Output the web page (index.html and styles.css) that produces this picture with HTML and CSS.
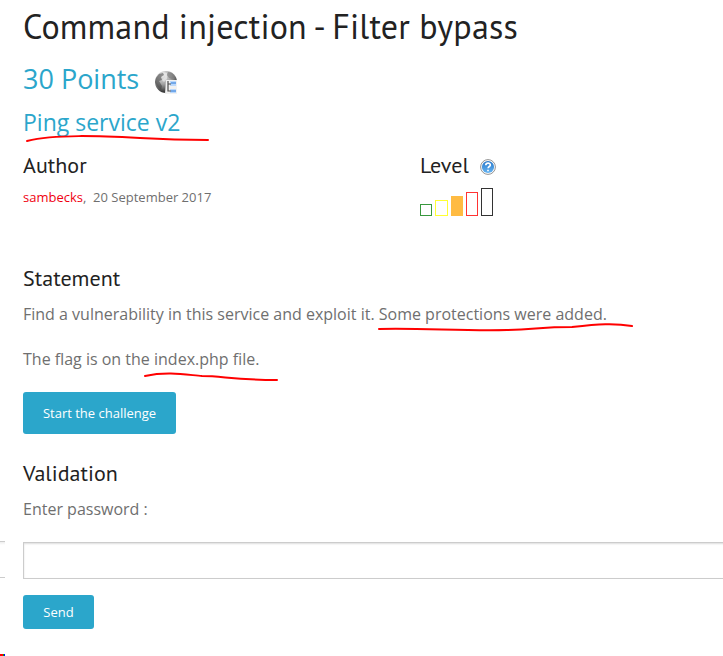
FILE: index.html
```html
<!DOCTYPE html>
<html lang="en">
<head>
<meta charset="utf-8">
<title>Command injection - Filter bypass</title>
<link rel="stylesheet" href="styles.css">
</head>
<body>
<main class="challenge">
  <h1 class="title"><span>Command injection - Filter bypass</span></h1>
  <h2 class="points"><span>30 Points</span>
    <svg class="globe" width="24" height="24" viewBox="0 0 24 24">
      <defs><radialGradient id="sphere" cx=".35" cy=".2" r=".8"><stop offset="0" stop-color="#eee"/><stop offset=".5" stop-color="#a2a2a2"/><stop offset="1" stop-color="#292929"/></radialGradient></defs>
      <circle cx="12" cy="12" r="11" fill="url(#sphere)"/>
      <path d="M2 8 5 4 9 3 10 5 7 7 8 10 5 11 8 16 7 20 3 16 1 12Z" fill="#444" opacity=".55"/>
      <path d="M14 2 18 3 21 7 18 9 15 8 13 5Z" fill="#777" opacity=".6"/>
      <path d="M9 2 13 3 13 9 10 12 8 10 11 7Z" fill="#eee" opacity=".6"/>
      <path d="M12 10h11v14H11z" fill="#f1f1f1"/>
      <path d="M16 11h6v5h-6zm0 8h6v4h-6z" fill="#bad8fb"/>
      <path d="M17 13h5m-5 8h5" stroke="#72a8ea" stroke-width="2"/>
      <path d="M14 11v10h3m-3-7h3" fill="none" stroke="#4b4b4b" stroke-width="1.2"/>
    </svg>
  </h2>
  <h3 class="subtitle"><span class="marked">Ping service v2
    <svg class="stroke stroke-name" width="186" height="10" viewBox="0 0 186 10"><path d="M2 6C30-1 75 1 115 3Q150 5 183 5"/></svg>
  </span></h3>
  <div class="info">
    <section>
      <h4 class="heading author"><span>Author</span></h4>
      <p class="meta"><a class="user">sambecks</a>,&nbsp; 20 September 2017</p>
    </section>
    <section>
      <h4 class="heading level"><span>Level</span>
        <svg class="help" width="16" height="16" viewBox="0 0 16 16">
          <defs><linearGradient id="blue" x2="0" y2="1"><stop stop-color="#2676c9"/><stop offset="1" stop-color="#67b5f2"/></linearGradient></defs>
          <circle cx="8" cy="8" r="7.4" fill="#fff" stroke="#929292"/><circle cx="8" cy="8" r="6.1" fill="url(#blue)"/>
          <path d="M5.8 6.2C5.8 3.4 10.4 3.6 10.3 6 10.2 7.6 8.2 7.5 8.1 9.3M8 10.7v1.6" fill="none" stroke="#fff" stroke-width="1.7"/>
        </svg>
      </h4>
      <div class="bars"><i class="bar b1"></i><i class="bar b2"></i><i class="bar b3"></i><i class="bar b4"></i><i class="bar b5"></i></div>
    </section>
  </div>
  <h4 class="heading statement"><span>Statement</span></h4>
  <p class="text first">Find a vulnerability in this service and exploit it. <span class="marked">Some protections were added.
    <svg class="stroke stroke-added" width="258" height="12" viewBox="0 0 258 12"><path d="M2 6C45 5 85 8 130 7C160 6 165 4 195 4C222 1 237 0 255 3"/></svg>
  </span></p>
  <p class="text">The flag is on the <span class="marked">index.php file.
    <svg class="stroke stroke-file" width="138" height="12" viewBox="0 0 138 12"><path d="M2 5C25 0 45 4 59 5C80 5 90 9 134 9"/></svg>
  </span></p>
  <button class="button start">Start the challenge</button>
  <h4 class="heading validation"><span>Validation</span></h4>
  <label class="text password" for="password">Enter password :</label>
  <div class="fields"><div class="neighbor"></div><input class="field" id="password" type="password"></div>
  <button class="button send">Send</button>
</main>
<div class="corner"></div>
</body>
</html>
```
FILE: styles.css
```css
* { box-sizing: border-box; }
body { margin: 0; width: 723px; height: 656px; overflow: hidden; position: relative; background: #fff; color: #6f6f6f; font: 16px/25px "Open Sans", sans-serif; }
h1, h2, h3, h4, p { margin: 0; font-weight: 400; }
.challenge { padding-left: 23px; height: 656px; display: flex; flex-direction: column; align-items: flex-start; }
.title { height: 54px; color: #222; font: 34px/52px "PT Sans", Lato, sans-serif; letter-spacing: .17px; white-space: nowrap; }
.points { display: flex; align-items: center; gap: 15px; height: 50px; color: #2ba6cb; font-size: 27px; line-height: 50px; }
.globe { margin-top: 6px; }
.subtitle { height: 36px; color: #2ba6cb; font-size: 23px; line-height: 36px; }
.marked { position: relative; }
.stroke { position: absolute; fill: none; stroke: #f00; stroke-width: 2; stroke-linecap: round; overflow: visible; }
.stroke-name { left: 2px; top: 29px; }
.stroke-added { left: -2px; top: 20px; }
.stroke-file { left: -11px; top: 23px; }
.info { display: grid; grid-template-columns: 397px 280px; height: 125px; padding-top: 10px; }
.heading { color: #222; font: 22px/30px "PT Sans", Lato, sans-serif; letter-spacing: .03px; height: 32px; }
.meta { margin-top: 3px; font-size: 13px; line-height: 25px; }
.user { color: #f00010; }
.level { display: flex; align-items: flex-start; gap: 11px; }
.help { margin-top: 9px; }
.bars { display: flex; align-items: flex-end; gap: 3px; height: 34px; }
.bar { width: 12px; border: 1px solid; }
.b1 { height: 12px; color: #38983d; }
.b2 { height: 16px; color: #ff3; width: 13px; }
.b3 { height: 20px; color: #ffbb42; background: #ffbb42; }
.b4 { height: 24px; color: #f33; }
.b5 { height: 28px; color: #333; }
.statement { margin-top: -2px; }
.first { margin: 7px 0 20px; }
.button { border: 0; border-radius: 3px; background: #2ba6cb; color: #fff; font: 13px/20px "Open Sans", sans-serif; padding: 0; }
.start { width: 153px; height: 42px; margin-top: 20px; }
.validation { margin-top: 24px; }
.password { margin-top: 7px; }
.fields { display: flex; margin: 20px 0 0 -23px; width: 723px; height: 37px; }
.neighbor { flex: none; width: 5px; height: 37px; margin: -1px 18px 0 0; border: solid #ccc; border-width: 1px 0; background: linear-gradient(#eee, #fff 3px); }
.field { width: 710px; flex: none; height: 37px; border: 1px solid #ccc; border-radius: 0; box-shadow: inset 0 1px 2px #0002; background: #fff; outline: 0; }
.send { width: 71px; height: 34px; margin-top: 16px; }
.corner { position: absolute; left: 0; bottom: 0; width: 5px; height: 2px; background: linear-gradient(90deg, #f00 3px, #0a0 3px 4px, #00f 4px); }
```
